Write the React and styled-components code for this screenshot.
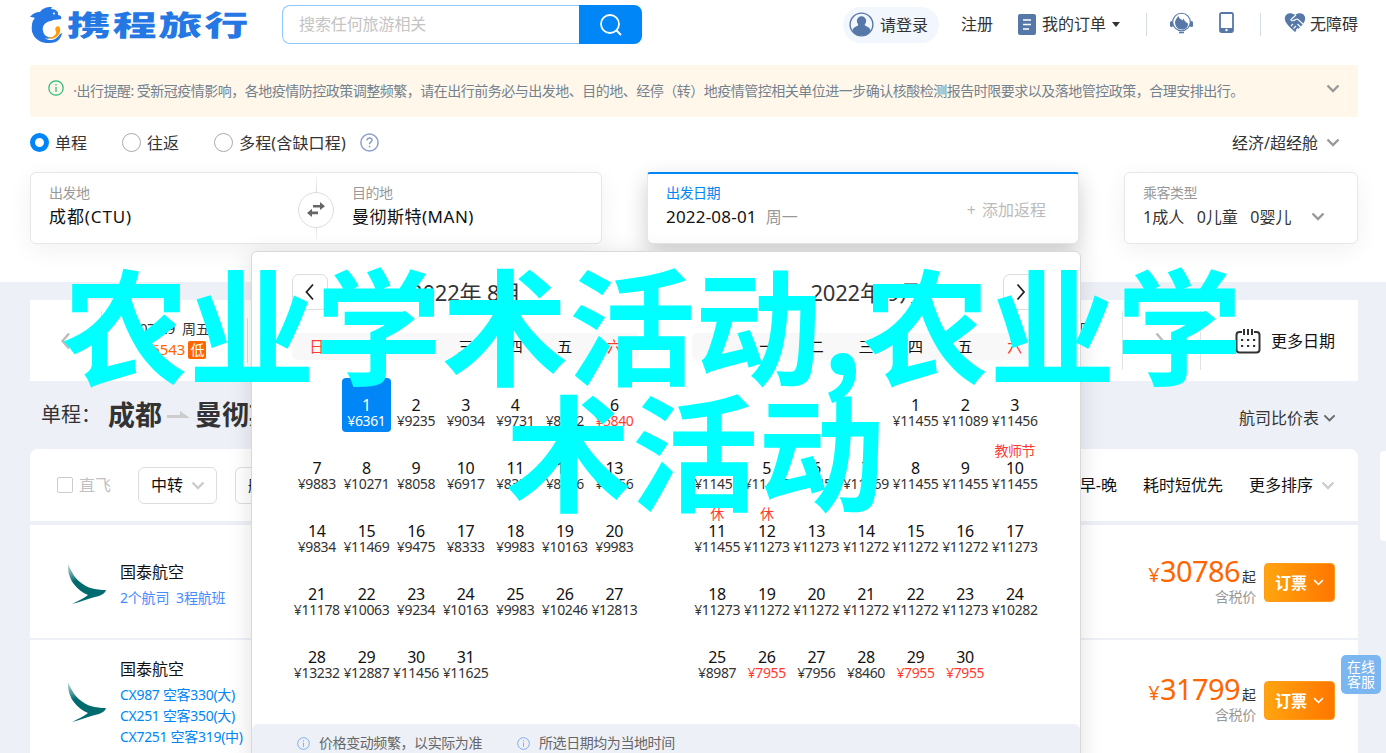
import React from "react";
import styled, { createGlobalStyle, css } from "styled-components";

const Global = createGlobalStyle`
  * { box-sizing: border-box; }
  body { margin: 0; overflow: hidden; background: #edf0f6; color: #333;
    font: 16px/20px "Noto Sans", "Noto Sans CJK SC", sans-serif; }
`;

const Page = styled.div`
  position: relative; width: 1386px; height: 753px; overflow: hidden; background: #edf0f6;
`;
const Top = styled.section`
  height: 282px; background: #fff; padding: 0 28px 0 30px; display: flex; flex-direction: column; overflow: hidden;
`;
const Header = styled.header` display: flex; height: 65px; align-items: flex-start; `;
const Logo = styled.div` display: flex; flex: none; width: 252px; padding-top: 6px; `;
const LogoText = styled.span`
  margin: 1px 0 0 4px; height: 32px; white-space: nowrap; color: #2577e3;
  font: 900 29px/32px "Noto Sans CJK SC", sans-serif; letter-spacing: 1.2px;
  transform: scaleX(1.515) skewX(-1deg); transform-origin: 0 50%;
`;
const Search = styled.div` display: flex; flex: none; width: 360px; height: 39px; margin-top: 5px; `;
const SearchInput = styled.div`
  flex: 1; border: 1px solid #8ec7fb; border-right: 0; border-radius: 8px 0 0 8px;
  padding-left: 16px; line-height: 37px; color: #c4c4c4; letter-spacing: -0.1px;
`;
const SearchButton = styled.div`
  width: 63px; background: #0086f6; border-radius: 0 8px 8px 0; display: flex; align-items: center; justify-content: center;
`;
const Account = styled.nav`
  display: flex; align-items: center; height: 48px; margin-left: 201px; flex: 1; line-height: 24px; white-space: nowrap;
`;
const Login = styled.div`
  display: flex; flex: none; align-items: center; gap: 6px; width: 96px; height: 36px; margin-top: 1px; padding-left: 6px;
  border-radius: 18px; background: #f2f7fe;
`;
const NavText = styled.span` margin-left: ${(p) => p.$ml || 0}px; `;
const Caret = styled.i` border: 4px solid transparent; border-top: 5px solid #333; border-bottom: 0; margin-left: 6px; `;
const Rule = styled.i` width: 1px; height: ${(p) => p.$h || 23}px; background: ${(p) => p.$c || "#d5dce6"}; margin-left: ${(p) => p.$ml || 0}px; flex: none; `;
const IconBox = styled.span` display: flex; flex: none; margin: ${(p) => p.$m || 0}; `;

const Notice = styled.div`
  display: flex; height: 52px; border-radius: 3px; background: #fff8ea; padding-left: 18px; color: #74818f;
  font-size: 14px; line-height: 52px; letter-spacing: -0.5px; white-space: nowrap;
`;
const NoticeText = styled.span` flex: 1; margin-left: 6px; `;
const Trip = styled.div` display: flex; align-items: center; height: 55px; padding-bottom: 4px; white-space: nowrap; `;
const Radio = styled.label` display: flex; align-items: center; gap: 6px; margin-right: ${(p) => p.$mr || 35}px; letter-spacing: ${(p) => p.$ls || 0}px; `;
const Dot = styled.i`
  width: 19px; height: 19px; margin-top: -1px; border-radius: 50%; background: #fff;
  border: ${(p) => (p.$on ? "5.5px solid #0086f6" : "1.5px solid #aaa")};
`;
const Cabin = styled.span` margin-left: auto; letter-spacing: 0; display: flex; align-items: center; gap: 8px; padding-right: 18px; `;
const Fields = styled.div` display: flex; height: 72px; flex: none; `;
const Card = styled.div`
  position: relative; display: flex; width: ${(p) => p.$w}px; margin-right: ${(p) => p.$mr || 0}px; height: 72px;
  background: #fff; border: 1px solid #e7e7e7; border-radius: 6px; box-shadow: 0 6px 24px rgba(0,0,0,.06);
  ${(p) => p.$active && css`border-top: 2px solid #0086f6; border-radius: 3px 3px 6px 6px; box-shadow: 0 8px 22px rgba(0,0,0,.2); z-index: 1;`}
`;
const Field = styled.div`
  width: ${(p) => p.$w || 220}px; padding: ${(p) => (p.$active ? 10 : 11)}px 0 0 18px; white-space: nowrap;
`;
const Label = styled.div` font-size: 14px; line-height: 18px; letter-spacing: -0.5px; color: ${(p) => p.$c || "#999"}; `;
const Value = styled.div` font-size: ${(p) => p.$s || 17}px; line-height: 24px; margin-top: 3px; color: ${(p) => p.$c || "#111"}; letter-spacing: ${(p) => p.$ls || 0}px; white-space: pre; `;
const Soft = styled.span` font-size: 16px; color: #999; margin-left: 9px; letter-spacing: 0; `;
const SwapLine = styled.div`
  width: 36px; height: 70px; display: flex; align-items: center; justify-content: center; padding-top: 3px;
  background: linear-gradient(#fff, #ddd 25%, #ddd 75%, #fff) 50% 0 / 1px 100% no-repeat;
`;
const Swap = styled.div`
  width: 36px; height: 36px; border: 1px solid #ddd; border-radius: 50%; background: #fff; display: flex; align-items: center; justify-content: center;
`;
const AddReturn = styled.div` margin-left: auto; padding-right: 32px; line-height: 72px; color: #bbb; word-spacing: 2px; `;

const Results = styled.main` padding: 18px 28px 0 30px; `;
const DateStrip = styled.div` display: flex; align-items: center; height: 81px; background: #fff; `;
const DayCell = styled.div`
  width: 145px; text-align: center; font-size: 14px; line-height: 21px; letter-spacing: -0.2px; white-space: pre; padding-bottom: 3px;
`;
const DayPrice = styled.div` display: flex; align-items: center; justify-content: center; gap: 3px; color: #f60; font-size: 15px; letter-spacing: 0; `;
const Low = styled.span`
  width: 18px; height: 18px; border-radius: 2px; background: #f60; color: #fff; font-size: 14px; line-height: 17px;
`;
const Hidden = styled.div` flex: 1; text-align: right; padding: 0 32px 24px 0; font-size: 14px; `;
const More = styled.span` color: #111; margin-left: 10px; width: 87px; `;
const Heading = styled.div` display: flex; align-items: center; height: 68px; padding: 0 22px 0 11px; white-space: nowrap; font-size: 20px; `;
const City = styled.b` font-size: 27px; line-height: 36px; margin-left: ${(p) => p.$ml}px; `;
const Compare = styled.span` margin-left: auto; font-size: 16px; display: flex; align-items: center; gap: 4px; padding-top: 6px; `;
const Filter = styled.div`
  display: flex; align-items: center; height: 72px; padding: 0 23px 0 27px; background: #fff; border-radius: 8px 8px 0 0; color: #111; white-space: nowrap;
`;
const Box = styled.i` width: 16px; height: 16px; border: 1px solid #ccc; border-radius: 2px; margin-right: 6px; `;
const Direct = styled.span` color: #c1c1c1; width: 59px; `;
const Select = styled.div`
  width: 79px; height: 37px; border: 1px solid #ddd; border-radius: 6px; display: flex; align-items: center; gap: 8px; padding-left: 12px; margin-right: 18px;
`;
const Sort = styled.div` display: flex; align-items: center; margin-left: auto; gap: 26px; `;
const Flight = styled.article`
  display: flex; height: ${(p) => p.$h}px; margin-top: ${(p) => p.$gap}px; background: #fff; padding: ${(p) => p.$pt}px 23px 0 38px;
`;
const Airline = styled.div` margin: ${(p) => p.$mt}px 0 0 12px; color: #111; white-space: pre; `;
const Details = styled.div`
  margin-top: 5px; font-size: 14px; line-height: 21px; letter-spacing: ${(p) => p.$ls}px; color: ${(p) => p.$c || "#0086f6"};
`;
const Price = styled.div` margin-left: auto; margin-top: -10px; text-align: right; color: #f60; font-size: 29px; line-height: 34px; letter-spacing: -0.6px; white-space: nowrap; `;
const Yen = styled.span` font-size: 20px; margin-right: 1px; `;
const From = styled.span` font-size: 14px; color: #333; margin-left: 2px; letter-spacing: 0; `;
const Tax = styled.div` margin-top: -5px; font-size: 14px; line-height: 16px; color: #999; letter-spacing: -0.3px; `;
const Book = styled.div`
  width: 71px; height: 39px; margin: -1px 0 0 8px; border-radius: 4px; background: linear-gradient(90deg, #ffa50f, #ff7600);
  border: 1px solid #ff9a1a; color: #fff; font-weight: 700; display: flex; align-items: center; justify-content: center; gap: 6px;
`;

const Popup = styled.section`
  position: absolute; left: 251px; top: 251px; width: 830px; height: 520px; z-index: 2; background: #fff;
  border: 1px solid #d9d9d9; border-radius: 6px; box-shadow: 0 4px 24px rgba(0,0,0,.12);
`;
const Months = styled.div` display: flex; justify-content: space-between; height: 472px; padding: 0 40.5px 0 40px; `;
const Month = styled.div` width: 347.2px; `;
const MonthHead = styled.div`
  display: flex; align-items: center; justify-content: space-between; flex-direction: ${(p) => (p.$right ? "row-reverse" : "row")};
  height: 81px; padding-bottom: 1px; font-size: 22px; letter-spacing: -0.2px;
`;
const MonthTitle = styled.span` padding-bottom: 1px; `;
const Arrow = styled.div`
  width: 36px; height: 36px; border: 1px solid #ddd; border-radius: 7px; display: flex; align-items: center; justify-content: center;
`;
const ArrowSpace = styled.span` width: 36px; `;
const Weekdays = styled.div`
  display: grid; grid-template-columns: repeat(7, 1fr); height: 27px; border-radius: 5px; background: #f8f8f8; text-align: center; font-size: 15px; line-height: 27px; color: #111;
`;
const Weekday = styled.span` color: ${(p) => (p.$red ? "#ff3b30" : "inherit")}; `;
const Days = styled.div` display: grid; grid-template-columns: repeat(7, 1fr); grid-auto-rows: 54px; row-gap: 9px; margin-top: 18px; `;
const Day = styled.div`
  display: flex; flex-direction: column; align-items: center; border-radius: 4px; color: ${(p) => (p.$on ? "#fff" : "#111")};
  background: ${(p) => (p.$on ? "#0086f6" : "transparent")}; white-space: nowrap;
`;
const Tag = styled.span` height: 18px; font-size: 14px; line-height: 19px; letter-spacing: -0.5px; color: #ff3b30; `;
const Num = styled.span` font-size: 16px; line-height: 18px; letter-spacing: -0.4px; `;
const Fare = styled.span` margin-top: -1px; font-size: 14px; line-height: 15px; letter-spacing: -0.36px; color: ${(p) => (p.$on ? "#fff" : p.$red ? "#ff3b30" : "#333")}; `;
const Tips = styled.footer`
  display: flex; align-items: center; height: 38px; padding-left: 45px; border-radius: 6px 6px 0 0; background: #edf0f6; color: #666; font-size: 14px; letter-spacing: -0.42px;
`;
const Tip = styled.span` display: flex; align-items: center; gap: 9px; margin-right: 35px; `;
const Service = styled.aside`
  position: absolute; left: 1341px; top: 655px; width: 40px; height: 39px; border-radius: 5px; background: #7cb6f1; color: #fff;
  font-size: 14px; line-height: 15px; text-align: center; padding-top: 4px;
`;
const SideTab = styled.aside` position: absolute; right: 0; top: 451px; width: 6px; height: 90px; background: #fff; border-radius: 4px 0 0 4px; `;
const Caption = styled.div`
  position: absolute; z-index: 3; left: 62px; top: 258px; color: #0ff; font: 700 126.6px/126px "Noto Sans CJK SC", sans-serif; white-space: nowrap;
`;
const CaptionLine = styled.div` padding-left: ${(p) => p.$indent || 0}px; `;

const Chevron = ({ d = "down", w = 14, c = "#999", s = 2.4 }) => {
  const side = d === "left" || d === "right";
  const pts = { down: "1.5,1.5 7,7 12.5,1.5", left: "8,1.5 1.5,9 8,16.5", right: "1.5,1.5 8,9 1.5,16.5" }[d];
  return (
    <svg width={side ? 10 : w} height={side ? 18 : (w * 9) / 14} viewBox={side ? "0 0 10 18" : "0 0 14 9"}>
      <polyline points={pts} fill="none" stroke={c} strokeWidth={s} />
    </svg>
  );
};
const Info = ({ c, s = 16 }) => (
  <svg width={s} height={s} viewBox="0 0 16 16" fill="none" stroke={c} strokeWidth="1.2">
    <circle cx="8" cy="8" r="7.2" /><path d="M8 7v5M8 4v1.5" />
  </svg>
);
const Dolphin = () => (
  <svg width="33" height="38" viewBox="0 0 33 38">
    <path d="M0 11C3 7 7 6 10 6C12 3 15 1 22 1L21 3C26 3 29 6 28 9C31 9 32 12 31 13C28 14 24 13 21 15C14 16 12 21 13 25C14 30 18 32 22 31C20 33 17 33 15 32C19 36 27 34 30 28L32 27C31 33 27 37 20 37C9 38 0 30 2 19C2 16 3 14 5 12C3 11 1 11 0 11Z" fill="#2577e3" />
    <path d="M26 21C29 19 31 22 30 26C28 32 22 34 17 32C23 32 27 28 26 26C25 24 25 22 26 21Z" fill="#ff9d0a" />
    <circle cx="24" cy="7.5" r="1" fill="#fff" />
  </svg>
);
const Tail = () => (
  <svg width="40" height="42" viewBox="0 0 40 42">
    <defs><linearGradient id="fade" x1="0" y1="0" x2=".3" y2="1"><stop stopColor="#006b6e" stopOpacity=".2" /><stop offset=".45" stopColor="#006b6e" /></linearGradient></defs>
    <path d="M0 0C4 9 7 14 12 18C19 24 27 26 38 26C37 29 35 30 31 32C22 34 12 38 4 40C9 37 15 35 20 31C7 25-1 14 0 0Z" fill="url(#fade)" />
  </svg>
);

const WEEK = ["日", "一", "二", "三", "四", "五", "六"];
const AUG = [6361, 9235, 9034, 9731, 8862, 5840, 9883, 10271, 8058, 6917, 8333, 8666, 9456, 9834, 11469, 9475, 8333, 9983, 10163, 9983, 11178, 10063, 9234, 10163, 9983, 10246, 12813, 13232, 12887, 11456, 11625];
const SEP = [11455, 11089, 11456, 11455, 11455, 11455, 11769, 11455, 11455, 11455, 11455, 11273, 11273, 11272, 11272, 11272, 11273, 11273, 11272, 11272, 11272, 11272, 11273, 10282, 8987, 7955, 7956, 8460, 7955, 7955];
const TAGS = { 10: "教师节", 11: "休", 12: "休" };

const Calendar = ({ title, fares, start, right, selected, tags = {} }) => (
  <Month>
    <MonthHead $right={right}>
      <Arrow><Chevron d={right ? "right" : "left"} c="#222" s={1.8} /></Arrow>
      <MonthTitle>{title}</MonthTitle>
      <ArrowSpace />
    </MonthHead>
    <Weekdays>{WEEK.map((w, i) => <Weekday key={w} $red={i % 6 === 0}>{w}</Weekday>)}</Weekdays>
    <Days>
      {Array.from({ length: start }, (_, i) => <span key={"b" + i} />)}
      {fares.map((f, i) => {
        const on = selected === i + 1;
        return (
          <Day key={i} $on={on}>
            <Tag>{tags[i + 1]}</Tag><Num>{i + 1}</Num><Fare $on={on} $red={f === 5840 || f === 7955}>¥{f}</Fare>
          </Day>
        );
      })}
    </Days>
  </Month>
);

const Fee = ({ amount }) => (
  <>
    <Price><Yen>¥</Yen>{amount}<From>起</From><Tax>含税价</Tax></Price>
    <Book>订票<Chevron w={11} c="#fff" s={2} /></Book>
  </>
);

export default function App() {
  return (
    <Page>
      <Global />
      <Top>
        <Header>
          <Logo><Dolphin /><LogoText>携程旅行</LogoText></Logo>
          <Search>
            <SearchInput>搜索任何旅游相关</SearchInput>
            <SearchButton>
              <svg width="24" height="24" viewBox="0 0 24 24" fill="none" stroke="#fff" strokeWidth="1.8"><circle cx="11" cy="11" r="9" /><path d="M17.5 17.5l4 4" strokeLinecap="round" /></svg>
            </SearchButton>
          </Search>
          <Account>
            <Login>
              <svg width="25" height="25" viewBox="0 0 25 25"><circle cx="12.5" cy="12.5" r="11.4" fill="none" stroke="#5678a8" strokeWidth="1.4" /><circle cx="12.5" cy="9" r="4.7" fill="#5678a8" /><path d="M9.5 12h6c0 3 6 2 6 7-4 6-14 6-18 0 0-5 6-4 6-7z" fill="#5678a8" /></svg>
              请登录
            </Login>
            <NavText $ml={22}>注册</NavText>
            <IconBox $m="0 0 0 25px">
              <svg width="18" height="21" viewBox="0 0 18 21"><rect width="18" height="21" rx="2" fill="#5678a8" /><path d="M5 6h8M5 10.5h8M5 15h6" stroke="#fff" strokeWidth="1.4" /></svg>
            </IconBox>
            <NavText $ml={6}>我的订单</NavText><Caret /><Rule $ml={26} />
            <IconBox $m="-3px 0 0 23px">
              <svg width="23" height="22" viewBox="0 0 23 22"><circle cx="11.5" cy="10" r="8.8" fill="none" stroke="#5678a8" strokeWidth="1.1" /><path d="M8.500 3.500c0 3 2 3 4 5l1-2c1 3 3 4 4.500 5 0 4-2.500 6-6.500 6S5 14 5 10c1-3 2-4 3.500-6.500z" fill="#5678a8" /><rect x="0" y="9" width="3" height="6" rx="1.500" fill="#5678a8" /><rect x="20" y="9" width="3" height="6" rx="1.500" fill="#5678a8" /><path d="M9 20.500h5" stroke="#5678a8" strokeWidth="1.600" /></svg>
            </IconBox>
            <IconBox $m="-3px 0 0 26px">
              <svg width="15" height="21" viewBox="0 0 15 21"><rect x="1" y="1" width="13" height="19" rx="1.500" fill="#fff" stroke="#5678a8" strokeWidth="1.800" /><path d="M1 16h13v4H1z" fill="#5678a8" /><circle cx="7.500" cy="18" r="1.200" fill="#fff" /></svg>
            </IconBox>
            <Rule $ml={26} />
            <IconBox $m="-3px 4px 0 23px">
              <svg width="22" height="20" viewBox="0 0 22 20"><path d="M11 2C7-1 2 0 1 4c-1 4 2 8 10 15C19 12 22 8 21 4 20 0 15-1 11 2z" fill="#5678a8" /><path d="M12 2L7 6.500c0 2 3 1.500 4.500 0l2-.5 5.500 5M7 13l2-2M9.500 15.500l2.500-2.500M12 17.500l2-2M13.500 11l3.500 3.500" fill="none" stroke="#fff" strokeWidth="1.100" /></svg>
            </IconBox>
            <NavText>无障碍</NavText>
          </Account>
        </Header>
        <Notice>
          <IconBox $m="15px 0 0"><Info c="#1fbb75" /></IconBox>
          <NoticeText>&nbsp;·出行提醒: 受新冠疫情影响，各地疫情防控政策调整频繁，请在出行前务必与出发地、目的地、经停（转）地疫情管控相关单位进一步确认核酸检测报告时限要求以及落地管控政策，合理安排出行。</NoticeText>
          <IconBox $m="19px 18px 0 0"><Chevron /></IconBox>
        </Notice>
        <Trip>
          <Radio $mr={35}><Dot $on />单程</Radio><Radio $mr={35}><Dot />往返</Radio>
          <Radio $mr={14} $ls={0.15}><Dot />多程(含缺口程)</Radio>
          <svg width="19" height="19" viewBox="0 0 19 19" fill="none" stroke="#8b9fc9" strokeWidth="1.500"><circle cx="9.500" cy="9.500" r="8.600" /><path d="M7 7.500C7 4 12.500 4.300 12 7.500 11.800 9 9.500 9 9.500 11.300M9.500 12.800v1.700" /></svg>
          <Cabin>经济/超经舱<Chevron /></Cabin>
        </Trip>
        <Fields>
          <Card $w={572} $mr={45}>
            <Field $w={267}><Label>出发地</Label><Value $ls={0.9}>成都(CTU)</Value></Field>
            <SwapLine><Swap>
              <svg width="20" height="15" viewBox="0 0 20 15" fill="#666"><path d="M7 3h7V0l5 4.300L14 8V5.500H7zM12 9.500H6V6.700L1 11l5 4v-2.800h6z" /></svg>
            </Swap></SwapLine>
            <Field><Label>目的地</Label><Value $ls={0.5}>曼彻斯特(MAN)</Value></Field>
          </Card>
          <Card $w={432} $mr={45} $active>
            <Field $active><Label $c="#0086f6">出发日期</Label><Value $ls={0.2}>2022-08-01<Soft>周一</Soft></Value></Field>
            <AddReturn>+ 添加返程</AddReturn>
          </Card>
          <Card $w={234}>
            <Field $w={186}><Label>乘客类型</Label><Value $s={16} $c="#333">1成人   0儿童   0婴儿</Value></Field>
            <IconBox $m="39px 0 0"><Chevron /></IconBox>
          </Card>
        </Fields>
      </Top>

      <Results>
        <DateStrip>
          <IconBox $m="0 30px 0 31px"><Chevron d="left" c="#bbb" /></IconBox>
          <Rule $h={59} $c="#e3e3e3" />
          <DayCell>07-29  周五<DayPrice>¥6543<Low>低</Low></DayPrice></DayCell>
          <Rule $h={45} $c="#ddd" />
          <Hidden>周四</Hidden>
          <Rule $h={59} $c="#e3e3e3" />
          <IconBox $m="0 35px 0 32px"><Chevron d="right" c="#bbb" /></IconBox>
          <Rule $h={59} $c="#e3e3e3" />
          <IconBox $m="0 0 0 34px">
            <svg width="26" height="26" viewBox="0 0 26 26" fill="none" stroke="#333" strokeWidth="2"><rect x="1.500" y="4" width="23" height="20.500" rx="3" /><path d="M7 4h12" stroke="#fff" strokeWidth="3" /><path d="M9 1v6M13 1v6M17 1v6" /><path d="M6 12h15M6 18h15" strokeDasharray="2.200 3.800" strokeWidth="2.200" /></svg>
          </IconBox>
          <More>更多日期</More>
        </DateStrip>
        <Heading>
          单程：<City $ml={7}>成都</City>
          <IconBox $m="0 5px 0 5px"><svg width="23" height="8" viewBox="0 0 23 8"><path d="M0 4h13V0l10 7H0z" fill="#ccc" /></svg></IconBox>
          <City $ml={0}>曼彻斯特</City>
          <Compare>航司比价表<Chevron w={13} c="#666" s={2} /></Compare>
        </Heading>
        <Filter>
          <Box /><Direct>直飞</Direct>
          <Select>中转<Chevron c="#ccc" /></Select><Select>航司</Select>
          <Sort><span>起飞早-晚</span><span>耗时短优先</span><span>更多排序</span><IconBox $m="0 0 0 -18px"><Chevron c="#ccc" /></IconBox></Sort>
        </Filter>
        <Flight $h={113} $gap={4} $pt={39}>
          <Tail /><Airline $mt={-2}>国泰航空<Details $c="#428cff" $ls={-0.2}>2个航司  3程航班</Details></Airline><Fee amount="30786" />
        </Flight>
        <Flight $h={140} $gap={2} $pt={42}>
          <Tail />
          <Airline $mt={-23}>国泰航空<Details $ls={-0.3}>CX987 空客330(大)<br />CX251 空客350(大)<br />CX7251 空客319(中)</Details></Airline>
          <Fee amount="31799" />
        </Flight>
      </Results>

      <Popup>
        <Months>
          <Calendar title="2022年 8月" fares={AUG} start={1} selected={1} />
          <Calendar title="2022年 9月" fares={SEP} start={4} right tags={TAGS} />
        </Months>
        <Tips>
          <Tip><Info c="#7cadf0" s={13} />价格变动频繁，以实际为准</Tip>
          <Tip><Info c="#7cadf0" s={13} />所选日期均为当地时间</Tip>
        </Tips>
      </Popup>
      <SideTab />
      <Service>在线<br />客服</Service>
      <Caption>
        <CaptionLine>农业学术活动,农业学</CaptionLine>
        <CaptionLine $indent={443}>术活动</CaptionLine>
      </Caption>
    </Page>
  );
}
